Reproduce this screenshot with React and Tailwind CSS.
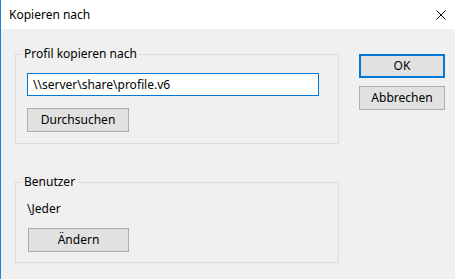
import React from 'react';

function WinButton({ children, primary = false, className = '' }) {
    return (
        <button
            className={`flex items-center justify-center bg-[#e1e1e1] text-black text-[12px] leading-none ${
                primary ? 'border-2 border-[#0078d7]' : 'border border-[#adadad]'
            } ${className}`}
        >
            {children}
        </button>
    );
}

function GroupBox({ label, className = '', children }) {
    return (
        <fieldset className={`border border-[#dcdcdc] pl-[11px] ${className}`}>
            <legend className="-ml-[5px] px-[2px] text-[12px] leading-[16px] text-black">{label}</legend>
            {children}
        </fieldset>
    );
}

export default function App() {
    return (
        <div
            className="w-[455px] h-[279px] bg-[#f0f0f0] border-l border-[#1883d7] flex flex-col overflow-hidden"
            style={{ fontFamily: '"Segoe UI", "Noto Sans", "Liberation Sans", sans-serif' }}
        >
            {/* title bar */}
            <div className="h-[29px] bg-white flex items-center justify-between pl-[8px] pr-[9px] shrink-0">
                <span className="text-[12px] text-black pt-[1px]">Kopieren nach</span>
                <svg width="10" height="10" viewBox="0 0 10 10" className="mt-[1px]">
                    <path d="M0.5 0.5 L9.5 9.5 M9.5 0.5 L0.5 9.5" stroke="#000" strokeWidth="1" fill="none" />
                </svg>
            </div>

            {/* body */}
            <div className="flex pl-[14px] pt-[17px]">
                <div className="w-[324px] flex flex-col">
                    <GroupBox label="Profil kopieren nach" className="h-[98px]">
                        <div className="mt-[11px] w-[292px] h-[23px] bg-white border border-[#0078d7] flex items-center pl-[5px] text-[12px] text-black">
                            \\server\share\profile.v6
                        </div>
                        <WinButton className="mt-[12px] w-[102px] h-[24px]">Durchsuchen</WinButton>
                    </GroupBox>

                    <GroupBox label="Benutzer" className="mt-[30px] h-[89px]">
                        <div className="mt-[11px] h-[16px] text-[12px] leading-[16px] text-black">\Jeder</div>
                        <WinButton className="mt-[11px] ml-[1px] w-[101px] h-[24px]">Ändern</WinButton>
                    </GroupBox>
                </div>

                <div className="ml-[20px] pt-[8px] flex flex-col gap-[8px]">
                    <WinButton primary className="w-[86px] h-[24px]">OK</WinButton>
                    <WinButton className="w-[86px] h-[24px]">Abbrechen</WinButton>
                </div>
            </div>
        </div>
    );
}
